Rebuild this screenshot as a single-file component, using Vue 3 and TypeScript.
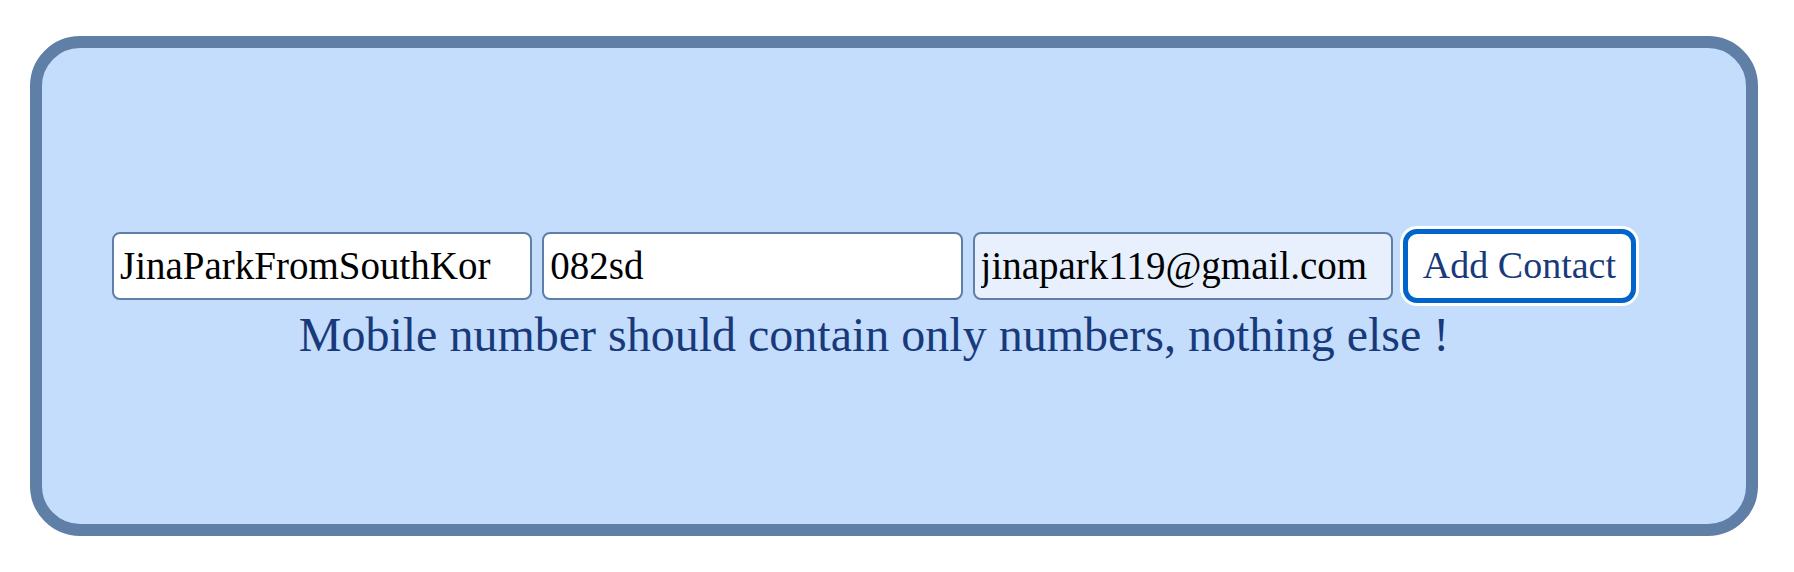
<script setup lang="ts">
import { ref } from 'vue'

const name = ref<string>('JinaParkFromSouthKor')
const mobile = ref<string>('082sd')
const email = ref<string>('jinapark119@gmail.com')
const message = ref<string>('Mobile number should contain only numbers, nothing else !')
</script>

<template>
  <main class="panel">
    <form class="row" @submit.prevent>
      <input v-model="name" class="field" type="text" aria-label="Name" />
      <input v-model="mobile" class="field" type="text" aria-label="Mobile number" />
      <input v-model="email" class="field filled" type="email" aria-label="Email" />
      <button class="add" type="submit">Add Contact</button>
    </form>
    <p class="message" role="alert">{{ message }}</p>
  </main>
</template>

<style>
body {
  background: #ffffff;
}
</style>

<style scoped>
.panel {
  box-sizing: border-box;
  margin: 36px 36px 36px 30px;
  padding: 181px 110px 163px 70px;
  border: 12px solid #5f7fa7;
  border-radius: 50px;
  background: #c4ddfd;
  font-family: "Liberation Serif", serif;
  color: #193a7a;
}
.row {
  display: flex;
  align-items: center;
  gap: 10px;
}
.field {
  box-sizing: border-box;
  flex: 1;
  min-width: 0;
  height: 68px;
  padding: 0 6px 2px;
  border: 2px solid #5f7fa7;
  border-radius: 8px;
  background: #ffffff;
  color: #000000;
  font: 39px "Liberation Serif", serif;
}
.filled {
  background: #e8f0fe;
}
.add {
  box-sizing: border-box;
  height: 74px;
  padding: 0 15px 2px;
  border: 5px solid #0064cb;
  border-radius: 14px;
  box-shadow: 0 0 0 3px #ffffff;
  background: #ffffff;
  color: #193a7a;
  font: 38px "Liberation Serif", serif;
  white-space: nowrap;
}
.message {
  margin: 6px 0 0;
  font-size: 48px;
  line-height: 52px;
  text-align: center;
}
</style>
